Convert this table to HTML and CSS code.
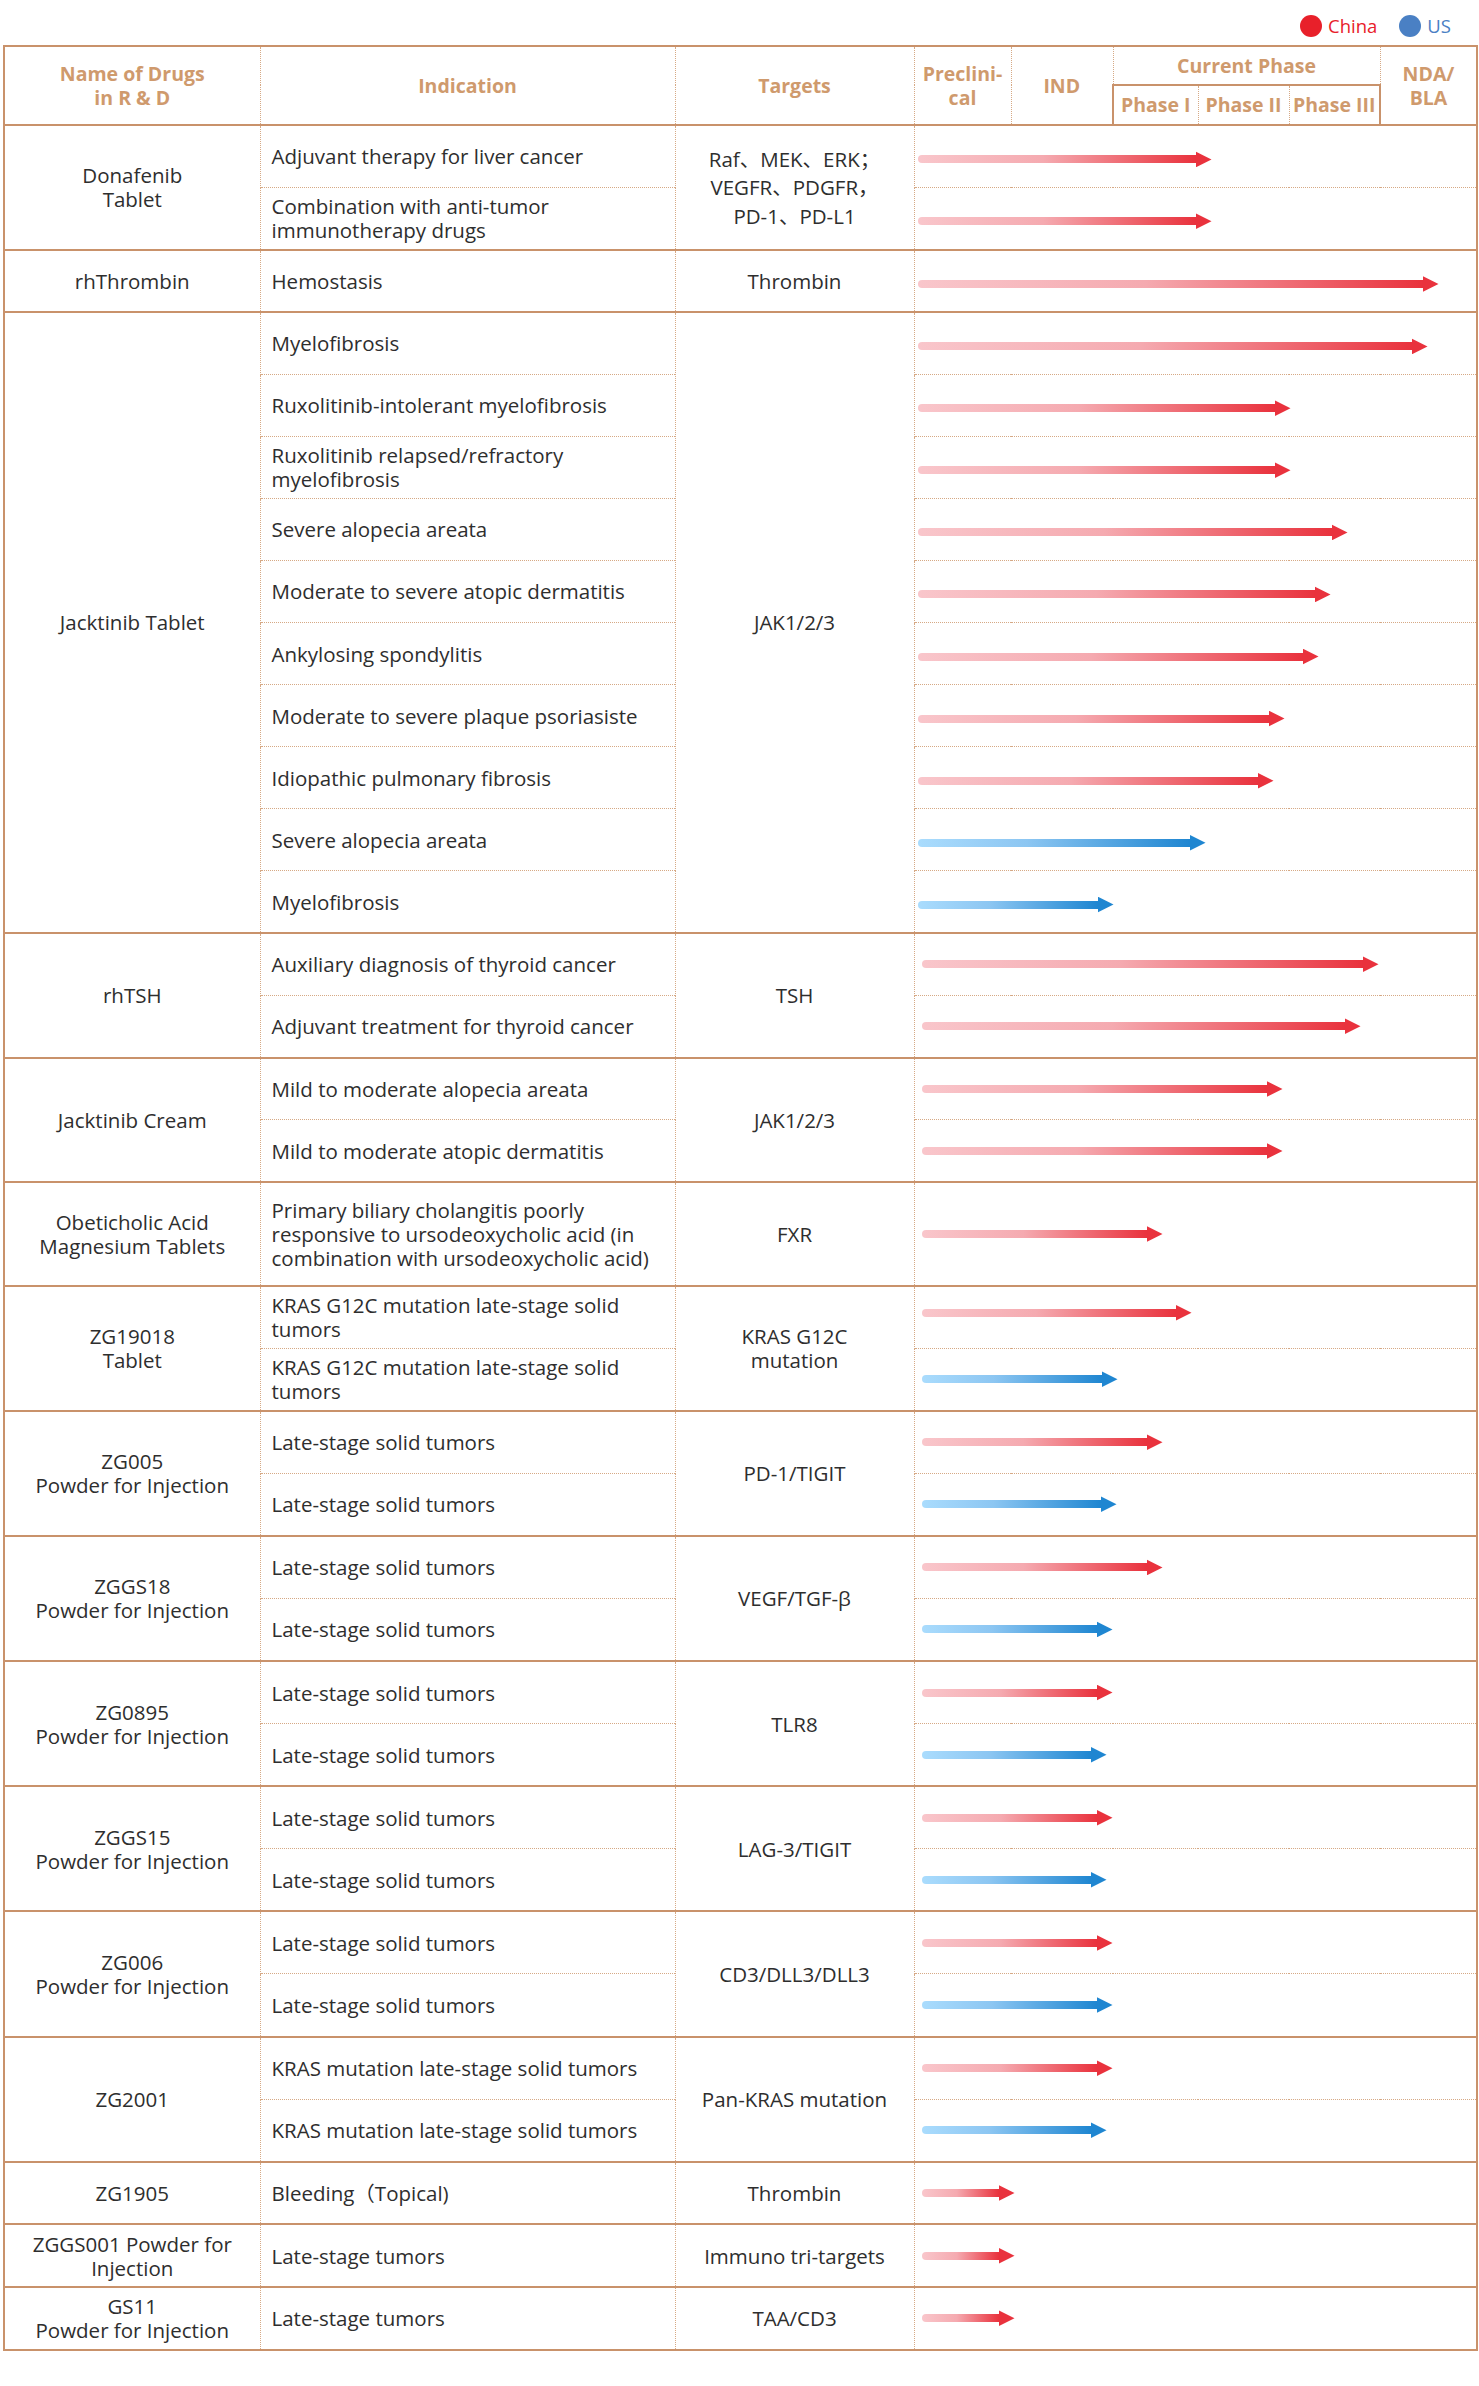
FILE: index.html
```html
<!DOCTYPE html>
<html lang="en">
<head>
<meta charset="utf-8">
<title>R&amp;D Pipeline</title>
<link rel="stylesheet" href="styles.css">
</head>
<body>
<div class="page">
  <div class="legend">
    <div class="legend-item china"><span class="dot"></span><span>China</span></div>
    <div class="legend-item us"><span class="dot"></span><span>US</span></div>
  </div>
  <table class="pipeline">
    <colgroup>
      <col class="c-name"><col class="c-ind"><col class="c-tgt"><col class="c-pre"><col class="c-ind2"><col class="c-p1"><col class="c-p2"><col class="c-p3"><col class="c-nda">
    </colgroup>
    <thead>
      <tr class="h1">
        <th rowspan="2" class="first">Name of Drugs<br>in R &amp; D</th>
        <th rowspan="2">Indication</th>
        <th rowspan="2">Targets</th>
        <th rowspan="2">Preclini-<br>cal</th>
        <th rowspan="2">IND</th>
        <th colspan="3" class="current">Current Phase</th>
        <th rowspan="2">NDA/<br>BLA</th>
      </tr>
      <tr class="h2">
        <th class="p1">Phase I</th>
        <th class="p2">Phase II</th>
        <th class="p3">Phase III</th>
      </tr>
    </thead>

    <tbody class="grp">
      <tr><td rowspan="2" class="name">Donafenib<br>Tablet</td><td class="ind">Adjuvant therapy for liver cancer</td><td rowspan="2" class="tgt cjk">Raf、MEK、ERK；<br>VEGFR、PDGFR，<br>PD-1、PD-L1</td><td colspan="6" class="bar low"><div class="arrow cn" style="width:294px"><span class="shaft"></span><span class="head"></span></div></td></tr>
      <tr class="sub"><td class="ind">Combination with anti-tumor immunotherapy drugs</td><td colspan="6" class="bar low"><div class="arrow cn" style="width:294px"><span class="shaft"></span><span class="head"></span></div></td></tr>
    </tbody>

    <tbody class="grp">
      <tr><td class="name">rhThrombin</td><td class="ind">Hemostasis</td><td class="tgt">Thrombin</td><td colspan="6" class="bar low"><div class="arrow cn" style="width:521px"><span class="shaft"></span><span class="head"></span></div></td></tr>
    </tbody>

    <tbody class="grp compact">
      <tr><td rowspan="10" class="name">Jacktinib Tablet</td><td class="ind">Myelofibrosis</td><td rowspan="10" class="tgt">JAK1/2/3</td><td colspan="6" class="bar low"><div class="arrow cn" style="width:510px"><span class="shaft"></span><span class="head"></span></div></td></tr>
      <tr class="sub"><td class="ind">Ruxolitinib-intolerant myelofibrosis</td><td colspan="6" class="bar low"><div class="arrow cn" style="width:373px"><span class="shaft"></span><span class="head"></span></div></td></tr>
      <tr class="sub"><td class="ind">Ruxolitinib relapsed/refractory myelofibrosis</td><td colspan="6" class="bar low"><div class="arrow cn" style="width:373px"><span class="shaft"></span><span class="head"></span></div></td></tr>
      <tr class="sub"><td class="ind">Severe alopecia areata</td><td colspan="6" class="bar low"><div class="arrow cn" style="width:430px"><span class="shaft"></span><span class="head"></span></div></td></tr>
      <tr class="sub"><td class="ind">Moderate to severe atopic dermatitis</td><td colspan="6" class="bar low"><div class="arrow cn" style="width:413px"><span class="shaft"></span><span class="head"></span></div></td></tr>
      <tr class="sub"><td class="ind">Ankylosing spondylitis</td><td colspan="6" class="bar low"><div class="arrow cn" style="width:401px"><span class="shaft"></span><span class="head"></span></div></td></tr>
      <tr class="sub"><td class="ind">Moderate to severe plaque psoriasiste</td><td colspan="6" class="bar low"><div class="arrow cn" style="width:367px"><span class="shaft"></span><span class="head"></span></div></td></tr>
      <tr class="sub"><td class="ind">Idiopathic pulmonary fibrosis</td><td colspan="6" class="bar low"><div class="arrow cn" style="width:356px"><span class="shaft"></span><span class="head"></span></div></td></tr>
      <tr class="sub"><td class="ind">Severe alopecia areata</td><td colspan="6" class="bar low"><div class="arrow us" style="width:288px"><span class="shaft"></span><span class="head"></span></div></td></tr>
      <tr class="sub"><td class="ind">Myelofibrosis</td><td colspan="6" class="bar low"><div class="arrow us" style="width:196px"><span class="shaft"></span><span class="head"></span></div></td></tr>
    </tbody>

    <tbody class="grp">
      <tr><td rowspan="2" class="name">rhTSH</td><td class="ind">Auxiliary diagnosis of thyroid cancer</td><td rowspan="2" class="tgt">TSH</td><td colspan="6" class="bar late"><div class="arrow cn" style="width:457px"><span class="shaft"></span><span class="head"></span></div></td></tr>
      <tr class="sub"><td class="ind">Adjuvant treatment for thyroid cancer</td><td colspan="6" class="bar late"><div class="arrow cn" style="width:439px"><span class="shaft"></span><span class="head"></span></div></td></tr>
    </tbody>

    <tbody class="grp">
      <tr><td rowspan="2" class="name">Jacktinib Cream</td><td class="ind">Mild to moderate alopecia areata</td><td rowspan="2" class="tgt">JAK1/2/3</td><td colspan="6" class="bar late"><div class="arrow cn" style="width:361px"><span class="shaft"></span><span class="head"></span></div></td></tr>
      <tr class="sub"><td class="ind">Mild to moderate atopic dermatitis</td><td colspan="6" class="bar late"><div class="arrow cn" style="width:361px"><span class="shaft"></span><span class="head"></span></div></td></tr>
    </tbody>

    <tbody class="grp">
      <tr class="tall"><td class="name">Obeticholic Acid Magnesium Tablets</td><td class="ind">Primary biliary cholangitis poorly responsive to ursodeoxycholic acid (in combination with ursodeoxycholic acid)</td><td class="tgt">FXR</td><td colspan="6" class="bar late"><div class="arrow cn" style="width:241px"><span class="shaft"></span><span class="head"></span></div></td></tr>
    </tbody>

    <tbody class="grp">
      <tr><td rowspan="2" class="name">ZG19018<br>Tablet</td><td class="ind">KRAS G12C mutation late-stage solid tumors</td><td rowspan="2" class="tgt">KRAS G12C<br>mutation</td><td colspan="6" class="bar late high"><div class="arrow cn" style="width:270px"><span class="shaft"></span><span class="head"></span></div></td></tr>
      <tr class="sub"><td class="ind">KRAS G12C mutation late-stage solid tumors</td><td colspan="6" class="bar late"><div class="arrow us" style="width:196px"><span class="shaft"></span><span class="head"></span></div></td></tr>
    </tbody>

    <tbody class="grp roomy">
      <tr><td rowspan="2" class="name">ZG005<br>Powder for Injection</td><td class="ind">Late-stage solid tumors</td><td rowspan="2" class="tgt">PD-1/TIGIT</td><td colspan="6" class="bar late"><div class="arrow cn" style="width:241px"><span class="shaft"></span><span class="head"></span></div></td></tr>
      <tr class="sub"><td class="ind">Late-stage solid tumors</td><td colspan="6" class="bar late"><div class="arrow us" style="width:195px"><span class="shaft"></span><span class="head"></span></div></td></tr>
    </tbody>

    <tbody class="grp roomy">
      <tr><td rowspan="2" class="name">ZGGS18<br>Powder for Injection</td><td class="ind">Late-stage solid tumors</td><td rowspan="2" class="tgt">VEGF/TGF-β</td><td colspan="6" class="bar late"><div class="arrow cn" style="width:241px"><span class="shaft"></span><span class="head"></span></div></td></tr>
      <tr class="sub"><td class="ind">Late-stage solid tumors</td><td colspan="6" class="bar late"><div class="arrow us" style="width:191px"><span class="shaft"></span><span class="head"></span></div></td></tr>
    </tbody>

    <tbody class="grp roomy">
      <tr><td rowspan="2" class="name">ZG0895<br>Powder for Injection</td><td class="ind">Late-stage solid tumors</td><td rowspan="2" class="tgt">TLR8</td><td colspan="6" class="bar late"><div class="arrow cn" style="width:191px"><span class="shaft"></span><span class="head"></span></div></td></tr>
      <tr class="sub"><td class="ind">Late-stage solid tumors</td><td colspan="6" class="bar late"><div class="arrow us" style="width:185px"><span class="shaft"></span><span class="head"></span></div></td></tr>
    </tbody>

    <tbody class="grp roomy">
      <tr><td rowspan="2" class="name">ZGGS15<br>Powder for Injection</td><td class="ind">Late-stage solid tumors</td><td rowspan="2" class="tgt">LAG-3/TIGIT</td><td colspan="6" class="bar late"><div class="arrow cn" style="width:191px"><span class="shaft"></span><span class="head"></span></div></td></tr>
      <tr class="sub"><td class="ind">Late-stage solid tumors</td><td colspan="6" class="bar late"><div class="arrow us" style="width:185px"><span class="shaft"></span><span class="head"></span></div></td></tr>
    </tbody>

    <tbody class="grp roomy">
      <tr><td rowspan="2" class="name">ZG006<br>Powder for Injection</td><td class="ind">Late-stage solid tumors</td><td rowspan="2" class="tgt">CD3/DLL3/DLL3</td><td colspan="6" class="bar late"><div class="arrow cn" style="width:191px"><span class="shaft"></span><span class="head"></span></div></td></tr>
      <tr class="sub"><td class="ind">Late-stage solid tumors</td><td colspan="6" class="bar late"><div class="arrow us" style="width:191px"><span class="shaft"></span><span class="head"></span></div></td></tr>
    </tbody>

    <tbody class="grp roomy">
      <tr><td rowspan="2" class="name">ZG2001</td><td class="ind">KRAS mutation late-stage solid tumors</td><td rowspan="2" class="tgt">Pan-KRAS mutation</td><td colspan="6" class="bar late"><div class="arrow cn" style="width:191px"><span class="shaft"></span><span class="head"></span></div></td></tr>
      <tr class="sub"><td class="ind">KRAS mutation late-stage solid tumors</td><td colspan="6" class="bar late"><div class="arrow us" style="width:185px"><span class="shaft"></span><span class="head"></span></div></td></tr>
    </tbody>

    <tbody class="grp roomy">
      <tr><td class="name">ZG1905</td><td class="ind cjk">Bleeding（Topical)</td><td class="tgt">Thrombin</td><td colspan="6" class="bar late"><div class="arrow cn" style="width:93px"><span class="shaft"></span><span class="head"></span></div></td></tr>
    </tbody>

    <tbody class="grp roomy">
      <tr><td class="name">ZGGS001 Powder for Injection</td><td class="ind">Late-stage tumors</td><td class="tgt">Immuno tri-targets</td><td colspan="6" class="bar late"><div class="arrow cn" style="width:93px"><span class="shaft"></span><span class="head"></span></div></td></tr>
    </tbody>

    <tbody class="grp roomy">
      <tr><td class="name">GS11<br>Powder for Injection</td><td class="ind">Late-stage tumors</td><td class="tgt">TAA/CD3</td><td colspan="6" class="bar late"><div class="arrow cn" style="width:93px"><span class="shaft"></span><span class="head"></span></div></td></tr>
    </tbody>
  </table>
</div>
</body>
</html>
```

FILE: styles.css
```css
* { box-sizing: border-box; }

body {
  margin: 0;
  background: #ffffff;
  font-family: "Open Sans", "Noto Sans CJK SC", sans-serif;
  color: #2e2e2e;
}

.page {
  width: 1479px;
  padding-left: 3px;
}

/* legend */
.legend {
  height: 45px;
  display: flex;
  justify-content: flex-end;
  align-items: center;
  gap: 22px;
  padding-right: 28px;
  padding-top: 6px;
  font-size: 18.5px;
}
.legend-item {
  display: flex;
  align-items: center;
  gap: 6px;
}
.dot {
  width: 22px;
  height: 22px;
  border-radius: 50%;
}
.legend-item.china { color: #e8202a; }
.legend-item.china .dot { background: #e8202a; }
.legend-item.us { color: #4a80c4; }
.legend-item.us .dot { background: #4a80c4; }

/* table */
.pipeline {
  width: 1473px;
  table-layout: fixed;
  border-collapse: collapse;
  border: 2px solid #c9926b;
  font-size: 20.5px;
  line-height: 24px;
}
.c-name { width: 256px; }
.c-ind { width: 415px; }
.c-tgt { width: 239px; }
.c-pre { width: 97px; }
.c-ind2 { width: 102px; }
.c-p1 { width: 85px; }
.c-p2 { width: 91px; }
.c-p3 { width: 91px; }
.c-nda { width: 97px; }

th {
  color: #cf9a6d;
  font-weight: 700;
  font-size: 19.5px;
  line-height: 24px;
  text-align: center;
  vertical-align: middle;
  padding: 0;
  border-left: 1px dotted #d6a985;
}
th.first { border-left: none; }
.h1 th { height: 39px; }
.h2 th { height: 40px; }
th.current { border-bottom: 2px solid #c9926b; }
th.p1 { border-left: 2px solid #c9926b; }
th.p3 { border-right: 2px solid #c9926b; }

tbody.grp { border-top: 2px solid #c9926b; }

td {
  padding: 0;
  vertical-align: middle;
  height: 62.4px;
}
tbody.compact td { height: 62.07px; }
tbody.roomy td { height: 62.6px; }
tr.tall td { height: 103.5px; }

td.name {
  text-align: center;
  padding: 0 10px;
}
td.ind {
  border-left: 1px dotted #d6a985;
  padding: 0 10px 0 11px;
}
td.tgt {
  text-align: center;
  border-left: 1px dotted #d6a985;
  padding: 0 8px;
}
td.tgt.cjk { line-height: 28.5px; }
td.bar {
  border-left: 1px dotted #d6a985;
  padding: 0 0 0 3px;
}
td.bar.late { padding-left: 7px; }
td.bar.low { padding-top: 6px; }
td.bar.high { padding-bottom: 9px; }

tr.sub td.ind,
tr.sub td.bar {
  border-top: 1px dotted #d6a985;
}

/* arrows */
.arrow {
  display: flex;
  align-items: center;
  height: 16px;
}
.shaft {
  flex: 1;
  height: 8px;
  border-radius: 4px 0 0 4px;
}
.head {
  width: 16px;
  height: 16px;
  clip-path: polygon(0 0, 100% 50%, 0 100%);
}
.arrow.cn .shaft { background: linear-gradient(90deg, #f9c6cb 0%, #f5aab0 45%, #e9323d 100%); }
.arrow.cn .head { background: #e9323d; }
.arrow.us .shaft { background: linear-gradient(90deg, #aadcfd 0%, #8cc6f2 40%, #1f86d1 100%); }
.arrow.us .head { background: #1f86d1; }
```
